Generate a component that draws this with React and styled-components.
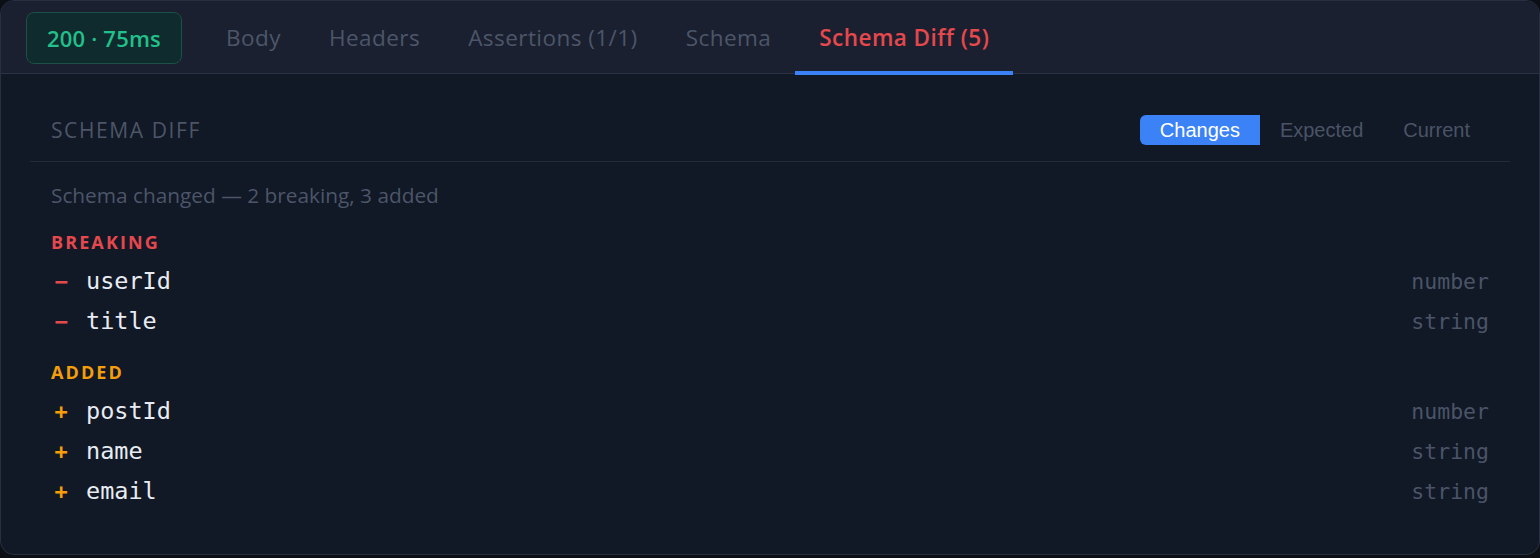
import styled, { createGlobalStyle } from "styled-components";

const GlobalStyle = createGlobalStyle`
  html, body {
    margin: 0;
    padding: 0;
    background: #0c0f16;
  }
  body {
    font-family: "Open Sans", "Noto Sans", sans-serif;
  }
`;

const Card = styled.div`
  box-sizing: border-box;
  width: 1540px;
  height: 555px;
  background: #111826;
  border: 1px solid #283040;
  border-radius: 14px;
  overflow: hidden;
`;

const TabBar = styled.div`
  display: flex;
  align-items: stretch;
  height: 72px;
  padding-left: 25px;
  background: #1a2030;
  border-bottom: 1px solid #2b3344;
`;

const Status = styled.div`
  box-sizing: border-box;
  align-self: center;
  width: 156px;
  height: 52px;
  margin-right: 20px;
  margin-top: 2px;
  display: flex;
  align-items: center;
  justify-content: center;
  background: #0f2b2d;
  border: 1.5px solid #1d5046;
  border-radius: 8px;
  color: #22c08a;
  font-size: 22px;
  font-weight: 600;
  letter-spacing: 0.2px;
`;

const Tab = styled.div`
  display: flex;
  align-items: center;
  padding: 3px 24px 0;
  font-size: 22.5px;
  letter-spacing: 0.45px;
  font-weight: ${({ $active }) => ($active ? 600 : 400)};
  color: ${({ $active }) => ($active ? "#e5484d" : "#4c5668")};
  border-bottom: 4px solid ${({ $active }) => ($active ? "#3b82f6" : "transparent")};
  margin-bottom: -2px;
`;

const Body = styled.div`
  padding: 27px 29px 0 29px;
`;

const PanelHead = styled.div`
  display: flex;
  align-items: center;
  justify-content: space-between;
  height: 60px;
  padding: 0 20px 0 21px;
  border-bottom: 1.5px solid #232a38;
`;

const Title = styled.div`
  margin-top: -3px;
  font-size: 21px;
  letter-spacing: 1.6px;
  color: #4c5668;
`;

const Segmented = styled.div`
  display: flex;
  height: 30px;
  margin-top: -2px;
`;

const Seg = styled.div`
  display: flex;
  align-items: center;
  padding: 0 20px;
  font-family: "Liberation Sans", Arial, sans-serif;
  font-size: 20px;
  color: ${({ $active }) => ($active ? "#ffffff" : "#4a5465")};
  background: ${({ $active }) => ($active ? "#3b82f6" : "transparent")};
  border-radius: ${({ $active }) => ($active ? "6px 0 0 6px" : "0")};
`;

const Content = styled.div`
  padding: 20px 21px 0 21px;
`;

const Summary = styled.div`
  font-size: 20.8px;
  line-height: 26px;
  color: #4c5668;
`;

const GroupTitle = styled.div`
  margin-top: ${({ $first }) => ($first ? "22px" : "19px")};
  margin-bottom: 7px;
  font-size: 18px;
  line-height: 24px;
  font-weight: 700;
  letter-spacing: 2.1px;
  color: ${({ $tone }) => ($tone === "red" ? "#e5484d" : "#f59e0b")};
`;

const Row = styled.div`
  display: flex;
  align-items: center;
  height: 40px;
  font-family: "DejaVu Sans Mono", "Liberation Mono", monospace;
`;

const Sign = styled.span`
  width: 20px;
  text-align: center;
  margin-right: 15px;
  font-size: 22px;
  font-weight: 700;
  color: ${({ $tone }) => ($tone === "red" ? "#e5484d" : "#f59e0b")};
`;

const Field = styled.span`
  flex: 1;
  font-size: 23.5px;
  color: #e8ecf2;
`;

const Type = styled.span`
  font-size: 21.5px;
  color: #4a5466;
`;

const tabs = ["Body", "Headers", "Assertions (1/1)", "Schema"];

const groups = [
  {
    name: "BREAKING",
    tone: "red",
    sign: "−",
    fields: [
      ["userId", "number"],
      ["title", "string"],
    ],
  },
  {
    name: "ADDED",
    tone: "orange",
    sign: "+",
    fields: [
      ["postId", "number"],
      ["name", "string"],
      ["email", "string"],
    ],
  },
];

export default function App() {
  return (
    <>
      <GlobalStyle />
      <Card>
        <TabBar>
          <Status>200 · 75ms</Status>
          {tabs.map((t) => (
            <Tab key={t}>{t}</Tab>
          ))}
          <Tab $active>Schema Diff (5)</Tab>
        </TabBar>
        <Body>
          <PanelHead>
            <Title>SCHEMA DIFF</Title>
            <Segmented>
              <Seg $active>Changes</Seg>
              <Seg>Expected</Seg>
              <Seg>Current</Seg>
            </Segmented>
          </PanelHead>
          <Content>
            <Summary>Schema changed — 2 breaking, 3 added</Summary>
            {groups.map((g, i) => (
              <div key={g.name}>
                <GroupTitle $first={i === 0} $tone={g.tone}>
                  {g.name}
                </GroupTitle>
                {g.fields.map(([f, type]) => (
                  <Row key={f}>
                    <Sign $tone={g.tone}>{g.sign}</Sign>
                    <Field>{f}</Field>
                    <Type>{type}</Type>
                  </Row>
                ))}
              </div>
            ))}
          </Content>
        </Body>
      </Card>
    </>
  );
}
